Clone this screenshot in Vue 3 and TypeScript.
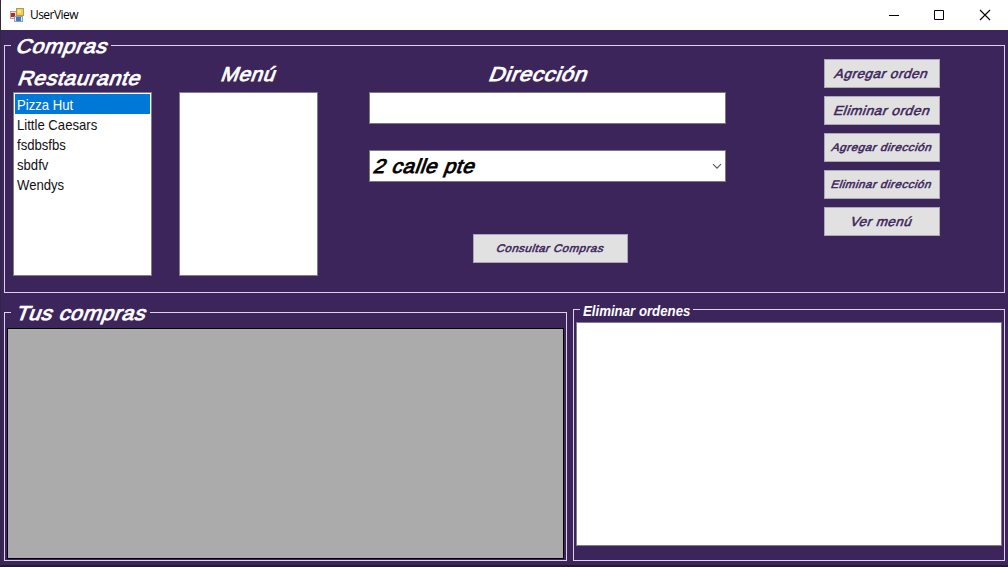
<script setup lang="ts">
import { ref } from 'vue'

const restaurants = ['Pizza Hut', 'Little Caesars', 'fsdbsfbs', 'sbdfv', 'Wendys']
const selected = ref(0)

const actions: { label: string; size: string }[] = [
  { label: 'Agregar orden', size: 'b1' },
  { label: 'Eliminar orden', size: 'b2' },
  { label: 'Agregar dirección', size: 'b3' },
  { label: 'Eliminar dirección', size: 'b4' },
  { label: 'Ver menú', size: 'b5' },
]
</script>

<template>
  <div class="window">
    <header class="titlebar">
      <svg class="app-icon" width="14" height="14" viewBox="0 0 14 14">
        <rect x="0.5" y="3.5" width="6" height="7" fill="#e9e4e2" stroke="#a9a5a5" />
        <rect x="1" y="5" width="4" height="4" fill="#c2281c" />
        <rect x="4.5" y="8.5" width="8" height="5" fill="#e4edf8" stroke="#8da0b8" />
        <rect x="6" y="9" width="5" height="4" fill="#3f78cf" />
        <rect x="6.5" y="0.5" width="7" height="7" fill="#f8cd48" stroke="#b59851" />
        <rect x="8" y="2" width="3" height="3" fill="#ffe78d" />
      </svg>
      <span class="title">UserView</span>
      <svg class="controls" width="102" height="14" viewBox="0 0 102 14" fill="none" stroke="#000">
        <path d="M0 7.5H10M45.5 2.5H54.5V11.5H45.5Z" />
        <path d="M91 2L101 12M101 2L91 12" stroke-width="1.1" />
      </svg>
    </header>

    <main class="body">
      <section class="group compras">
        <h2 class="legend lg1"><span class="slant">Compras</span></h2>
        <div class="col">
          <h3 class="label l1"><span class="slant">Restaurante</span></h3>
          <ul class="list">
            <li v-for="(r, i) in restaurants" :key="r" :class="{ on: i === selected }" @click="selected = i">
              <span>{{ r }}</span>
            </li>
          </ul>
        </div>
        <div class="col">
          <h3 class="label l2"><span class="slant">Menú</span></h3>
          <ul class="list"></ul>
        </div>
        <div class="col wide">
          <h3 class="label l3"><span class="slant">Dirección</span></h3>
          <div class="field"></div>
          <div class="field combo">
            <span class="slant">2 calle pte</span>
            <svg width="10" height="6" viewBox="0 0 10 6" fill="none" stroke="#555" stroke-width="1.1">
              <path d="M1 1.2L5 5.2L9 1.2" />
            </svg>
          </div>
          <button class="btn consult"><span class="slant b6">Consultar Compras</span></button>
        </div>
        <div class="actions">
          <button v-for="a in actions" :key="a.label" class="btn">
            <span class="slant" :class="a.size">{{ a.label }}</span>
          </button>
        </div>
      </section>

      <div class="bottom">
        <section class="group tus">
          <h2 class="legend lg2"><span class="slant">Tus compras</span></h2>
          <div class="datagrid"></div>
        </section>
        <section class="group elim">
          <h2 class="legend lg3"><span>Eliminar ordenes</span></h2>
          <div class="orders"></div>
        </section>
      </div>
    </main>
  </div>
</template>

<style>
body {
  margin: 0;
  overflow: hidden;
}
</style>

<style scoped>
* {
  box-sizing: border-box;
}
.window {
  width: 1008px;
  height: 567px;
  background: #3c255b;
  border-left: 1px solid #302840;
  border-bottom: 2px solid #211c2b;
  font-family: 'Liberation Sans', Arial, sans-serif;
}
.titlebar {
  display: flex;
  align-items: center;
  height: 30px;
  padding: 0 17px 0 9px;
  background: #fff;
}
.title {
  flex: 1;
  margin-left: 6px;
  font: 12px/30px 'Open Sans', sans-serif;
  letter-spacing: -0.55px;
  color: #000;
}
.body {
  padding: 15px 3px 0;
}
h2,
h3,
ul {
  margin: 0;
  padding: 0;
  list-style: none;
}
/* Emboldened regular face with a steep synthetic slant */
.slant {
  display: inline-block;
  white-space: nowrap;
  font-weight: normal;
  letter-spacing: 0.5px;
  -webkit-text-stroke: 0.8px currentColor;
  transform-origin: 0 75%;
  transform: scaleX(var(--sx, 1)) skewX(-19deg);
}
.group {
  position: relative;
  border: 1px solid #dfd0ec;
}
.legend {
  position: absolute;
  left: 6px;
  height: 24px;
  background: #3c255b;
  color: #fff;
  font-size: 20px;
  line-height: 24px;
  white-space: nowrap;
}
.lg1 {
  top: -12px;
  width: 100px;
  padding-left: 4px;
  --sx: 1.08;
}
.lg2 {
  top: -12px;
  width: 139px;
  padding-left: 4px;
  --sx: 1.08;
}
.lg3 {
  top: -8px;
  width: 113px;
  height: 18px;
  padding-left: 3px;
  font-size: 14px;
  line-height: 19px;
  font-style: italic;
}
.lg3 span {
  display: inline-block;
  transform: scaleX(0.945);
  transform-origin: 0 0;
}
.compras {
  display: flex;
  width: 1001px;
  height: 248px;
  padding-left: 8px;
}
.col {
  width: 139px;
  margin-right: 27px;
}
.label {
  height: 46px;
  color: #fff;
  font-size: 20px;
  line-height: 24px;
}
.l1 {
  padding: 20px 0 0 4px;
  --sx: 1.07;
}
.l2 {
  padding: 16px 0 0 41px;
  --sx: 1.05;
}
.l3 {
  padding: 16px 0 0 119px;
  --sx: 1.12;
}
.list {
  height: 184px;
  padding: 1px;
  border: 1px solid #827b8c;
  background: #fff;
}
.list li {
  height: 20px;
  padding-left: 2px;
  font-size: 15px;
  line-height: 22px;
  color: #111;
  white-space: nowrap;
}
.list li span {
  display: inline-block;
  transform: scaleX(0.875);
  transform-origin: 0 0;
}
.list li.on {
  background: #0078d7;
  color: #fff;
}
.wide {
  width: 357px;
  margin: 0 98px 0 24px;
}
.field {
  height: 32px;
  border: 1px solid #7a7a7a;
  background: #fff;
}
.combo {
  display: flex;
  align-items: center;
  justify-content: space-between;
  margin-top: 26px;
  padding: 0 3px 0 2px;
  color: #000;
  font-size: 20px;
  line-height: 30px;
  --sx: 1.05;
}
.btn {
  display: flex;
  align-items: center;
  justify-content: center;
  width: 116px;
  height: 29px;
  padding: 0;
  border: 1px solid #ada6b5;
  background: #e1e1e1;
  color: #3c255b;
  font-family: inherit;
}
.btn .slant {
  transform-origin: 50% 50%;
  -webkit-text-stroke-width: 0.5px;
}
.consult {
  width: 155px;
  margin: 52px 0 0 104px;
}
.actions {
  display: flex;
  flex-direction: column;
  gap: 8px;
  padding-top: 13px;
}
.b1,
.b2,
.b5 {
  font-size: 13px;
}
.b1 {
  --sx: 1.04;
}
.b2 {
  --sx: 1.06;
}
.b5 {
  --sx: 1.03;
}
.b3,
.b4,
.b6 {
  margin-top: -1px;
  font-size: 11px;
}
.b3 {
  --sx: 1.06;
}
.b4 {
  --sx: 1.05;
}
.b6 {
  --sx: 1.04;
}
.bottom {
  display: flex;
  align-items: flex-end;
  gap: 6px;
  height: 268px;
}
.tus {
  width: 563px;
  height: 249px;
  padding: 15px 2px 1px;
}
.datagrid {
  height: 231px;
  border: 1px solid #000;
  background: #ababab;
}
.elim {
  width: 432px;
  height: 252px;
  padding: 12px 2px 0;
}
.orders {
  height: 224px;
  border: 1px solid #827b8c;
  background: #fff;
}
</style>
